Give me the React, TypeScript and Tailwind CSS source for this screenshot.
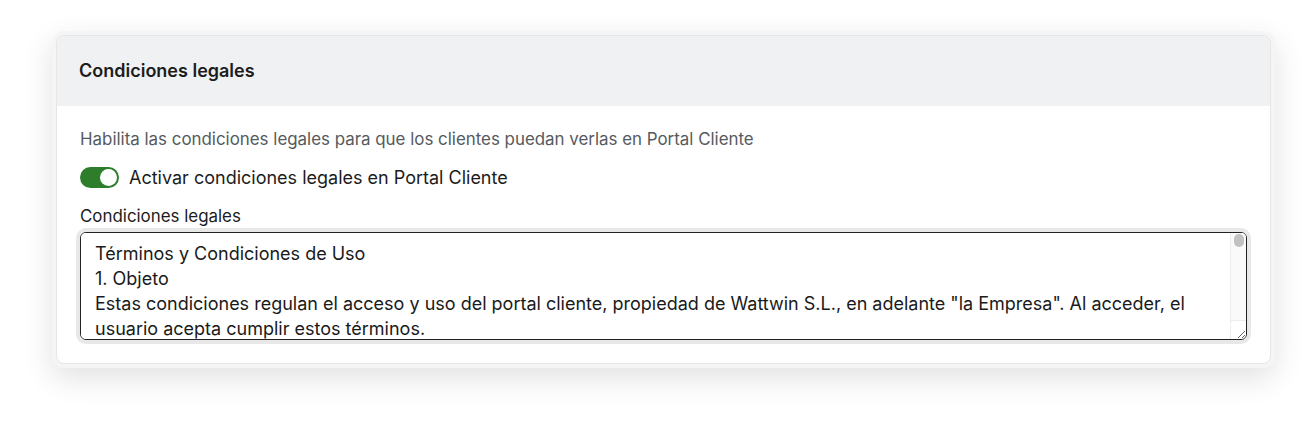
import { useState } from "react";

const legalText = `Términos y Condiciones de Uso
1. Objeto
Estas condiciones regulan el acceso y uso del portal cliente, propiedad de Wattwin S.L., en adelante "la Empresa". Al acceder, el usuario acepta cumplir estos términos.
2. Acceso al portal
El acceso al portal está reservado a los clientes de la Empresa. El usuario es responsable de mantener la confidencialidad de sus credenciales y de toda actividad realizada con ellas.
3. Uso del portal
El usuario se compromete a hacer un uso adecuado de los contenidos y servicios ofrecidos en el portal y a no emplearlos para actividades ilícitas.
4. Propiedad intelectual
Todos los contenidos del portal son propiedad de la Empresa o de terceros que han autorizado su uso. Queda prohibida su reproducción sin autorización.
5. Protección de datos
Los datos personales serán tratados conforme a la normativa vigente en materia de protección de datos. El usuario puede ejercer sus derechos contactando con la Empresa.
6. Responsabilidad
La Empresa no se hace responsable de los daños derivados del uso indebido del portal ni de interrupciones del servicio ajenas a su control.
7. Modificaciones
La Empresa podrá modificar estas condiciones en cualquier momento, notificándolo a través del portal.
8. Legislación aplicable
Estas condiciones se rigen por la legislación española. Para cualquier controversia, las partes se someten a los juzgados y tribunales competentes.`;

export default function App() {
  const [enabled, setEnabled] = useState(true);
  const [text, setText] = useState(legalText);

  return (
    <div className="min-h-[422px] bg-white pl-[52px] pr-[31px] pt-[31px] font-['Inter',sans-serif]">
      <div className="rounded-xl bg-[#f5f5f5] p-1 shadow-[0_10px_30px_rgba(0,0,0,0.12)]">
        <div className="overflow-hidden rounded-lg border border-[#e6e6e6] bg-white">
          <div className="flex h-[70px] items-center bg-[#f0f1f3] px-[22px]">
            <h3 className="text-[18px] font-semibold leading-6 text-[#1c1c1c]">
              Condiciones legales
            </h3>
          </div>

          <div className="px-[23px] pt-[23px] pb-[23px]">
            <p className="text-[16.9px] leading-5 text-[#555a60]">
              Habilita las condiciones legales para que los clientes puedan verlas en Portal Cliente
            </p>

            <label className="mt-4 flex h-6 items-center gap-[10px]">
              <button
                type="button"
                onClick={() => setEnabled(!enabled)}
                className={`flex h-[21px] w-[39px] items-center rounded-full p-[2px] ${
                  enabled ? "justify-end bg-[#2e7d2a]" : "justify-start bg-gray-300"
                }`}
              >
                <span className="h-[17px] w-[17px] rounded-full bg-white" />
              </button>
              <span className="text-[18px] text-[#1c1c1c]">
                Activar condiciones legales en Portal Cliente
              </span>
            </label>

            <p className="mt-[17px] text-[16.9px] leading-5 text-[#1c1c1c]">
              Condiciones legales
            </p>

            <div className="relative mt-[6px]">
              <textarea
                value={text}
                onChange={(e) => setText(e.target.value)}
                className="block h-[108px] w-full resize-y rounded-md border border-[#222] bg-white pl-[14px] pr-6 pt-[8px] text-[18px] leading-[25px] text-[#1a1a1a] outline-none ring-4 ring-[#e8e8e8]"
              />
              {/* scrollbar (headless hides native ones) */}
              <div className="pointer-events-none absolute top-px right-px bottom-px flex w-4 flex-col">
                <div className="flex flex-1 justify-center rounded-tr-[5px] border-l border-[#ededed] bg-[#fafafa] pt-px">
                  <div className="h-[13px] w-[10px] rounded-full bg-[#c1c1c1]" />
                </div>
                <div className="h-[19px] border-t border-l border-[#ededed]" />
              </div>
            </div>
          </div>
        </div>
      </div>
    </div>
  );
}
